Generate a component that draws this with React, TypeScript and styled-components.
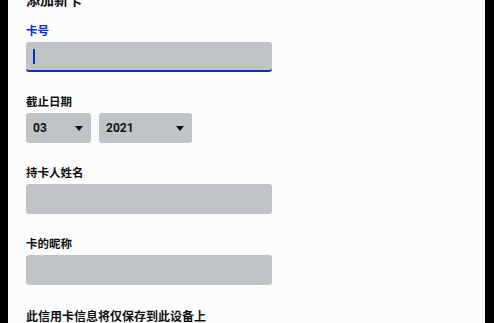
import React from "react";
import styled, { createGlobalStyle } from "styled-components";

const GlobalStyle = createGlobalStyle`
  html, body {
    margin: 0;
    padding: 0;
    background: #000;
    overflow: hidden;
  }
  body {
    font-family: Roboto, "Noto Sans CJK SC", sans-serif;
  }
`;

const Frame = styled.div`
  padding: 0 9px 0 8px;
  height: 323px;
`;

const Panel = styled.div`
  background: #fcfcfc;
  height: 323px;
  padding: 0 18px;
  display: flex;
  flex-direction: column;
  overflow: hidden;
`;

const Title = styled.h2`
  margin: -9px 0 0;
  font-size: 14px;
  line-height: 18px;
  font-weight: 700;
  color: #111;
`;

const Field = styled.div<{ $top: number }>`
  display: flex;
  flex-direction: column;
  gap: 4px;
  margin-top: ${(p) => p.$top}px;
`;

const Label = styled.label<{ $active?: boolean }>`
  font-size: 11.5px;
  line-height: 14px;
  font-weight: 700;
  color: ${(p) => (p.$active ? "#0b2fc4" : "#111")};
`;

const TextBox = styled.div<{ $focused?: boolean }>`
  width: 246px;
  height: 30px;
  box-sizing: border-box;
  background: #bfc4c7;
  border-radius: 3px;
  border-bottom: ${(p) => (p.$focused ? "2px solid #0b2fc4" : "none")};
  display: flex;
  align-items: center;
  padding-left: 7px;
`;

const Caret = styled.span`
  width: 2px;
  height: 15px;
  background: #0b2fc4;
`;

const SelectRow = styled.div`
  display: flex;
  gap: 8px;
`;

const Select = styled.div<{ $width: number }>`
  width: ${(p) => p.$width}px;
  height: 30px;
  box-sizing: border-box;
  background: #bfc4c7;
  border-radius: 3px;
  display: flex;
  align-items: center;
  justify-content: space-between;
  padding: 0 8px 0 7px;
  font-size: 12px;
  font-weight: 700;
  color: #111;
`;

const Arrow = styled.span`
  width: 0;
  height: 0;
  border-left: 4.5px solid transparent;
  border-right: 4.5px solid transparent;
  border-top: 5px solid #111;
`;

const Note = styled.p`
  margin: 24px 0 0;
  font-size: 12px;
  line-height: 16px;
  font-weight: 700;
  color: #111;
`;

export default function App() {
  return (
    <>
      <GlobalStyle />
      <Frame>
        <Panel>
          <Title>添加新卡</Title>
          <Field $top={15}>
            <Label $active>卡号</Label>
            <TextBox $focused>
              <Caret />
            </TextBox>
          </Field>
          <Field $top={23}>
            <Label>截止日期</Label>
            <SelectRow>
              <Select $width={65}>
                03
                <Arrow />
              </Select>
              <Select $width={93}>
                2021
                <Arrow />
              </Select>
            </SelectRow>
          </Field>
          <Field $top={23}>
            <Label>持卡人姓名</Label>
            <TextBox />
          </Field>
          <Field $top={23}>
            <Label>卡的昵称</Label>
            <TextBox />
          </Field>
          <Note>此信用卡信息将仅保存到此设备上</Note>
        </Panel>
      </Frame>
    </>
  );
}
